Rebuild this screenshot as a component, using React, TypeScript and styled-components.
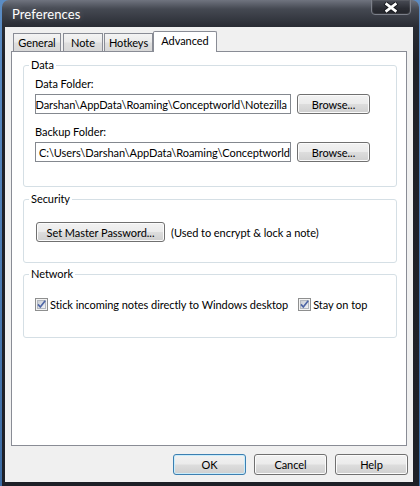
import React from "react";
import styled, { createGlobalStyle, css } from "styled-components";

const GlobalStyle = createGlobalStyle`
  html, body {
    margin: 0;
    padding: 0;
    background: #4f7fb6;
  }
  body {
    width: 420px;
    height: 486px;
    overflow: hidden;
    font-family: Lato, "Liberation Sans", sans-serif;
    font-size: 11px;
    letter-spacing: -0.05px;
    color: #000;
  }
  * { box-sizing: border-box; }
`;

const Desktop = styled.div`
  width: 420px;
  height: 486px;
  padding: 0 1px 0 2px;
  background: linear-gradient(180deg, #5b8cc4, #3d6ca4);
`;

const Frame = styled.div`
  height: 100%;
  display: flex;
  flex-direction: column;
  padding: 0 6px 4px 3px;
  border-radius: 7px 7px 0 0;
  background: linear-gradient(
    180deg,
    #70747f 0px,
    #454952 9px,
    #2a2d35 26px,
    #1f2128 60px,
    #1e2027 100%
  );
`;

const TitleBar = styled.div`
  height: 27px;
  flex: none;
  display: flex;
  align-items: center;
  padding-left: 7px;
`;

const Title = styled.span`
  color: #fff;
  font-size: 13px;
  letter-spacing: 0.1px;
  text-shadow: 0 0 6px rgba(255, 255, 255, 0.25);
`;

const CloseButton = styled.div`
  margin-left: auto;
  margin-right: 2px;
  align-self: flex-start;
  margin-top: -1px;
  width: 40px;
  height: 16px;
  display: flex;
  align-items: center;
  justify-content: center;
  border: 1px solid #7c808a;
  border-radius: 0 0 4px 4px;
  background: linear-gradient(180deg, #4a4d56, #2b2d34 60%, #24262c);
  box-shadow: inset 0 0 0 1px rgba(255, 255, 255, 0.08);
`;

const Client = styled.div`
  height: 455px;
  flex: none;
  display: flex;
  flex-direction: column;
  padding: 4px 6px 7px 6px;
  background: #f0f0f0;
`;

const TabStrip = styled.div`
  height: 21px;
  flex: none;
  display: flex;
  align-items: flex-end;
  padding-left: 2px;
  margin-bottom: -1px;
  position: relative;
  z-index: 1;
`;

const Tab = styled.div<{ $active?: boolean; $w: number; $gap?: number }>`
  width: ${(p) => p.$w}px;
  margin-right: ${(p) => p.$gap ?? 0}px;
  display: flex;
  justify-content: center;
  border: 1px solid #898c95;
  border-bottom: none;
  white-space: nowrap;
  ${(p) =>
    p.$active
      ? css`
          height: 21px;
          padding-top: 2px;
          background: #fff;
          border-radius: 2px 2px 0 0;
        `
      : css`
          height: 18px;
          margin-bottom: 1px;
          padding-top: 2px;
          background: linear-gradient(180deg, #f4f4f4, #ebebeb 45%, #dedede 55%, #d8d8d8);
        `}
`;

const Panel = styled.div`
  height: 395px;
  flex: none;
  display: flex;
  flex-direction: column;
  padding: 13px 9px 0 11px;
  background: #fff;
  border: 1px solid #898c95;
`;

const Group = styled.div<{ $mt?: number; $pad: string }>`
  position: relative;
  margin-top: ${(p) => p.$mt ?? 0}px;
  padding: ${(p) => p.$pad};
  border: 1px solid #d5dfe5;
  border-radius: 3px;
`;

const GroupTitle = styled.span`
  position: absolute;
  top: -9px;
  left: 5px;
  padding: 0 2px;
  line-height: 16px;
  background: #fff;
`;

const FieldLabel = styled.div<{ $mt?: number }>`
  line-height: 15px;
  margin-top: ${(p) => p.$mt ?? 0}px;
`;

const FieldRow = styled.div`
  display: flex;
  align-items: center;
  gap: 6px;
  margin-top: 3px;
`;

const PathBox = styled.div<{ $end?: boolean }>`
  width: 256px;
  height: 20px;
  display: flex;
  align-items: center;
  justify-content: ${(p) => (p.$end ? "flex-end" : "flex-start")};
  padding: 0 3px;
  overflow: hidden;
  white-space: nowrap;
  border: 1px solid #84888f;
  background: #fff;
`;

const PushButton = styled.button<{ $w: number; $h?: number; $default?: boolean }>`
  width: ${(p) => p.$w}px;
  height: ${(p) => p.$h ?? 20}px;
  flex: none;
  padding: 0;
  font: inherit;
  letter-spacing: inherit;
  color: #000;
  border: 1px solid ${(p) => (p.$default ? "#3c7fb1" : "#707070")};
  border-radius: 3px;
  background: linear-gradient(180deg, #f2f2f2, #ebebeb 48%, #dddddd 52%, #cfcfcf);
  box-shadow: inset 0 0 0 1px ${(p) => (p.$default ? "#c9ecfb" : "#fbfbfb")};
`;

const InlineRow = styled.div`
  display: flex;
  align-items: center;
  gap: 6px;
  line-height: 15px;
`;

const CheckLabel = styled.label<{ $ml?: number }>`
  display: inline-flex;
  align-items: center;
  gap: 2px;
  margin-left: ${(p) => p.$ml ?? 0}px;
  white-space: nowrap;
`;

const ButtonRow = styled.div`
  display: flex;
  justify-content: flex-end;
  gap: 8px;
  margin-top: 8px;
  margin-right: -1px;
`;

function CloseGlyph() {
  return (
    <svg width="16" height="11" viewBox="0 0 16 11">
      <path d="M2 1 L14 10 M14 1 L2 10" stroke="#15171c" strokeWidth="4.6" fill="none" />
      <path d="M2.6 1.4 L13.4 9.6 M13.4 1.4 L2.6 9.6" stroke="#fff" strokeWidth="2.6" fill="none" />
    </svg>
  );
}

function CheckBox() {
  return (
    <svg width="13" height="13" viewBox="0 0 13 13">
      <defs>
        <linearGradient id="boxFill" x1="0" y1="0" x2="1" y2="1">
          <stop offset="0" stopColor="#c6cbd3" />
          <stop offset="1" stopColor="#f4f5f7" />
        </linearGradient>
      </defs>
      <rect x="0.5" y="0.5" width="12" height="12" fill="#f3f3f3" stroke="#8e8f8f" />
      <rect x="2.5" y="2.5" width="8" height="8" fill="url(#boxFill)" stroke="#b3b8c0" />
      <path d="M3 6.4 L5.3 9 L10.2 2.8" fill="none" stroke="#4e66a6" strokeWidth="1.7" />
    </svg>
  );
}

export default function App() {
  return (
    <>
      <GlobalStyle />
      <Desktop>
        <Frame>
          <TitleBar>
            <Title>Preferences</Title>
            <CloseButton>
              <CloseGlyph />
            </CloseButton>
          </TitleBar>
          <Client>
            <TabStrip>
              <Tab $w={48} $gap={2}>General</Tab>
              <Tab $w={40} $gap={1}>Note</Tab>
              <Tab $w={49}>Hotkeys</Tab>
              <Tab $w={64} $active>
                Advanced
              </Tab>
            </TabStrip>
            <Panel>
              <Group $pad="10px 0 24px 11px">
                <GroupTitle>Data</GroupTitle>
                <FieldLabel>Data Folder:</FieldLabel>
                <FieldRow>
                  <PathBox $end>
                    <span>{"C:\\Users\\Darshan\\AppData\\Roaming\\Conceptworld\\Notezilla"}</span>
                  </PathBox>
                  <PushButton $w={73}>Browse...</PushButton>
                </FieldRow>
                <FieldLabel $mt={10}>Backup Folder:</FieldLabel>
                <FieldRow>
                  <PathBox>
                    <span>{"C:\\Users\\Darshan\\AppData\\Roaming\\Conceptworld"}</span>
                  </PathBox>
                  <PushButton $w={73}>Browse...</PushButton>
                </FieldRow>
              </Group>
              <Group $mt={12} $pad="22px 0 20px 12px">
                <GroupTitle>Security</GroupTitle>
                <InlineRow>
                  <PushButton $w={129}>Set Master Password...</PushButton>
                  <span>(Used to encrypt &amp; lock a note)</span>
                </InlineRow>
              </Group>
              <Group $mt={11} $pad="22px 0 25px 11px">
                <GroupTitle>Network</GroupTitle>
                <InlineRow>
                  <CheckLabel>
                    <CheckBox />
                    Stick incoming notes directly to Windows desktop
                  </CheckLabel>
                  <CheckLabel $ml={4}>
                    <CheckBox />
                    Stay on top
                  </CheckLabel>
                </InlineRow>
              </Group>
            </Panel>
            <ButtonRow>
              <PushButton $w={73} $h={21} $default>
                OK
              </PushButton>
              <PushButton $w={73} $h={21}>
                Cancel
              </PushButton>
              <PushButton $w={73} $h={21}>
                Help
              </PushButton>
            </ButtonRow>
          </Client>
        </Frame>
      </Desktop>
    </>
  );
}
